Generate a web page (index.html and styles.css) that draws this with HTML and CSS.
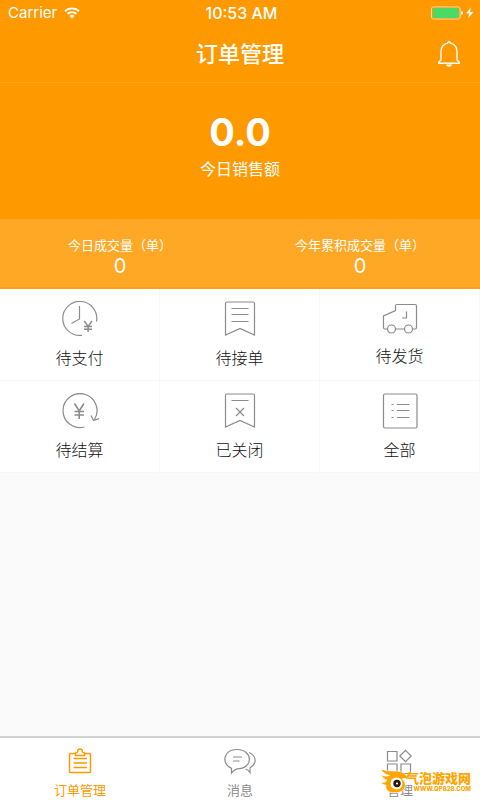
FILE: index.html
```html
<!DOCTYPE html>
<html lang="zh-CN">
<head>
<meta charset="utf-8">
<meta name="viewport" content="width=device-width, initial-scale=1">
<title>订单管理</title>
<link rel="stylesheet" href="styles.css">
</head>
<body>
<div class="app">
  <header class="header">
    <div class="status">
      <div class="status-left">
        <span>Carrier</span>
        <svg class="wifi" width="16" height="12" viewBox="0 0 16 12" aria-hidden="true">
          <path d="M1 4.2a10 10 0 0 1 14 0M3.6 6.9a6.3 6.3 0 0 1 8.8 0" fill="none" stroke="#fff" stroke-width="1.9"/>
          <path d="M5.4 8.9a3.8 3.8 0 0 1 5.2 0L8 11.6z" fill="#fff"/>
        </svg>
      </div>
      <time class="clock">10:53 AM</time>
      <div class="status-right">
        <svg width="44" height="14" viewBox="0 0 44 14" aria-hidden="true">
          <rect x=".5" y=".9" width="28.6" height="12.2" rx="2" fill="#ff9900" stroke="#ffd79a"/>
          <rect x="1.9" y="2" width="26" height="10" rx="1" fill="#4cd964"/>
          <path d="M30.2 4.800c2.400.8 2.400 3.600 0 4.400z" fill="#fff"/>
          <path d="M39.8 1.2 35.2 7.6h3l-1.2 5 5.300-6.600h-3.200z" fill="#fff"/>
        </svg>
      </div>
    </div>
    <div class="nav">
      <h1 class="title">订单管理</h1>
      <button class="bell" type="button" aria-label="通知">
        <svg width="24" height="28" viewBox="0 0 24 28" aria-hidden="true">
          <path d="M4 20V11.500C4 7 7 3.600 10.700 3.100V2.400q1.300-1.300 2.600 0v.7C17 3.600 20 7 20 11.500V20l2.400 2.200q.2 1-.8 1.100H2.400q-1-.1-.8-1.100z" fill="none" stroke="#fff" stroke-width="1.4" stroke-linejoin="round"/>
          <path d="M9 24.600h6c-.5 3-5.500 3-6 0z" fill="#fff"/>
        </svg>
      </button>
    </div>
  </header>

  <main class="main">
    <section class="sales">
      <div class="sales-value">0.0</div>
      <div class="sales-label">今日销售额</div>
    </section>
    <section class="stats">
      <div class="stat"><div class="stat-label">今日成交量（单）</div><div class="stat-value">0</div></div>
      <div class="stat"><div class="stat-label">今年累积成交量（单）</div><div class="stat-value">0</div></div>
    </section>
    <nav class="grid" aria-label="订单">
      <a class="cell" href="#pay">
        <svg class="icon" viewBox="0 0 38 36" aria-hidden="true">
          <path d="M35.500 20.500A17 17 0 1 0 21 34.300M18.500 5v13l-8 4.500"/>
          <path d="M23.300 20l3.800 5.500 3.800-5.500M27.100 25.500V31M23 25.500h8M23 28.200h8" stroke-width="1.500"/>
        </svg>
        <span>待支付</span>
      </a>
      <a class="cell" href="#accept">
        <svg class="icon" viewBox="0 0 38 36" aria-hidden="true">
          <path d="M4.500 34V2.500q0-1.500 1.500-1.500h26q1.500 0 1.500 1.500V34L19 27.500zM10.500 7.500h17M10.500 13.500h17M10.500 20.500h17"/>
        </svg>
        <span>待接单</span>
      </a>
      <a class="cell" href="#ship">
        <svg class="icon icon-truck" viewBox="0 0 38 34" aria-hidden="true">
          <path d="M6.500 28H4q-1.500 0-1.500-1.500V15L14.500 9.500V5q0-1.500 1.500-1.500h18q1.500 0 1.500 1.500v21.500q0 1.500-1.500 1.500h-2M14.500 28h8.500M25.500 10.500v6.500H21"/>
          <circle cx="10.500" cy="28" r="4"/><circle cx="27.500" cy="28" r="4"/>
        </svg>
        <span>待发货</span>
      </a>
      <a class="cell" href="#settle">
        <svg class="icon" viewBox="0 0 38 36" aria-hidden="true">
          <path d="M23.500 34A17 17 0 1 1 33.500 26.500M30 22.500l2.500 5 5.500-2"/>
          <path d="M13.500 10.500l4.700 7.500 4.700-7.500M18.200 18V26M13.500 18.500h9.500M13.500 22h9.500" stroke-width="1.600"/>
        </svg>
        <span>待结算</span>
      </a>
      <a class="cell" href="#closed">
        <svg class="icon" viewBox="0 0 38 36" aria-hidden="true">
          <path d="M4.500 34V2.500q0-1.500 1.500-1.500h26q1.500 0 1.500 1.500V34L19 27.500zM10.500 7.500h17M15 15l8 8M23 15l-8 8"/>
        </svg>
        <span>已关闭</span>
      </a>
      <a class="cell" href="#all">
        <svg class="icon" viewBox="0 0 38 36" aria-hidden="true">
          <rect x="2.500" y="1" width="33.500" height="34" rx="1.500"/>
          <path d="M10.500 11.500h2M16 11.500h12.500M10.500 17.500h2M16 17.500h12.500M10.500 24.500h2M16 24.500h12.500"/>
        </svg>
        <span>全部</span>
      </a>
    </nav>
  </main>

  <nav class="tabs" aria-label="主导航">
    <a class="tab tab-active" href="#orders" aria-current="page">
      <svg width="32" height="28" viewBox="0 0 32 28" aria-hidden="true">
        <path d="M11.500 6.500H6.500q-1 0-1 1v17q0 1 1 1h19q1 0 1-1v-17q0-1-1-1h-5M9.500 11.500h13.500M9.500 16h13.500M9.500 20.500h13.500" stroke-width="1.500"/>
        <path d="M11.500 8.500V6.500q0-1 2-1.500c0-4 5-4 5 0q2 .5 2 1.500v2z" stroke-width="1.500"/>
      </svg>
      <span>订单管理</span>
    </a>
    <a class="tab" href="#messages">
      <svg width="32" height="28" viewBox="0 0 32 28" aria-hidden="true">
        <path d="M7.500 26v-4.600C-3.500 15.500 0 2.500 13 2.500c16 0 17 19.200 0 19.400Q9.500 23 7.500 26zM9 10h9M9 14h6.500"/>
        <path d="M25 5.500c8 3.500 8 11.500 1 15.200v4.800q-1.500-2.500-4.500-3.500"/>
      </svg>
      <span>消息</span>
    </a>
    <a class="tab" href="#manage">
      <svg width="32" height="28" viewBox="0 0 32 28" aria-hidden="true">
        <path d="M3.500 4.500h9.500v9.500h-9.500zM3.500 17h9.500v9.500h-9.500zM17 17h9.500v9.500h-9.500zM21.500 3.300l5.700 5.700-5.700 5.700L15.800 9z"/>
      </svg>
      <span>管理</span>
    </a>
    <div class="mark">
      <svg class="mark-logo" width="32" height="28" viewBox="0 0 32 28" aria-hidden="true">
        <path d="M1 1c5 2 9 2 14 2 8 0 13 4 13 9-3-2-5-2-6-1 5 3 5 12-4 13.500C9 26 5 22 6 17c-3 0-4-1-5-3 3 1 5 0 6-2C4 11.500 2 9 1.500 7c3 1.500 6 1.500 8 .5C5 6.500 2 4 1 1z" fill="#ffa500" stroke="#fff" stroke-width=".6"/>
        <circle cx="16.500" cy="15.500" r="6" fill="#fff"/>
        <circle cx="17" cy="15.500" r="3.700" fill="#2b1a05"/>
        <circle cx="17" cy="15.500" r="1.100" fill="#fff"/>
      </svg>
      <div class="mark-text">
        <span class="mark-name">气泡游戏网</span>
        <span class="mark-url">WWW.QP828.COM</span>
      </div>
    </div>
  </nav>
</div>
</body>
</html>
```

FILE: styles.css
```css
* { box-sizing: border-box; }

body {
  margin: 0;
  background: #fafafa;
  color: #111;
  font-family: Inter, "Noto Sans CJK SC", sans-serif;
}

a { color: inherit; text-decoration: none; }

.app { display: flex; flex-direction: column; min-height: 100vh; }

.header { background: #ff9900; color: #fff; border-bottom: 1px solid #ffa31a; }

.status {
  display: grid;
  grid-template-columns: 1fr auto 1fr;
  align-items: center;
  height: 26px;
  padding: 0 5px 0 8px;
  font-size: 15px;
  line-height: 20px;
}
.status-left { display: flex; align-items: center; gap: 7px; }
.status-right { display: flex; justify-content: flex-end; }
.clock { font-size: 16px; font-weight: 500; }

.nav {
  display: grid;
  grid-template-columns: 1fr auto 1fr;
  align-items: center;
  height: 56px;
  padding: 0 19px;
}
.title { grid-column: 2; margin: 0; font-size: 22px; line-height: 32px; font-weight: 500; }
.bell { justify-self: end; display: flex; padding: 0; border: 0; background: none; color: #fff; }

.main { flex: 1; }

.sales {
  display: flex;
  flex-direction: column;
  align-items: center;
  padding: 24px 0 38px;
  background: #ff9900;
  color: #fff;
}
.sales-value { font-size: 38px; line-height: 50px; font-weight: 700; }
.sales-label { font-size: 16px; line-height: 24px; }

.stats {
  display: grid;
  grid-template-columns: 1fr 1fr;
  padding: 17px 0 9px;
  background: #ffa826;
  border-bottom: 2px solid #ff9f12;
  color: #fff;
  text-align: center;
}
.stat-label { font-size: 13px; line-height: 18px; }
.stat-value { font-size: 20px; line-height: 24px; }

.grid { display: grid; grid-template-columns: repeat(3, 1fr); background: #fff; }
.cell {
  display: flex;
  flex-direction: column;
  align-items: center;
  gap: 9px;
  padding: 12px 0 10px;
  border-right: 1px solid #f8f8f8;
  border-bottom: 1px solid #f6f6f6;
  font-size: 16px;
  line-height: 24px;
  font-weight: 300;
}
.icon { width: 38px; height: 36px; fill: none; stroke: #8c8c8c; stroke-width: 1.2; }
.icon-truck { height: 34px; }

.tabs {
  position: relative;
  display: grid;
  grid-template-columns: repeat(3, 1fr);
  padding: 9px 0 1px;
  background: #fff;
  border-top: 2px solid #d2d2d2;
}
.tab {
  display: flex;
  flex-direction: column;
  align-items: center;
  gap: 6px;
  color: #8c8c8c;
  font-size: 13px;
  line-height: 18px;
}
.tab svg { fill: none; stroke: currentColor; stroke-width: 1.2; }
.tab-active { color: #ff9900; }

.mark {
  position: absolute;
  right: 9px;
  bottom: 4px;
  display: flex;
  align-items: center;
  color: #ffa500;
}
.mark-text {
  display: flex;
  flex-direction: column;
  align-items: flex-end;
  margin-left: -6px;
  text-shadow: 0 0 1px #fff;
}
.mark-name { font-size: 13px; line-height: 14px; font-weight: 900; }
.mark-url { font-size: 6px; line-height: 8px; font-weight: 800; }
```
